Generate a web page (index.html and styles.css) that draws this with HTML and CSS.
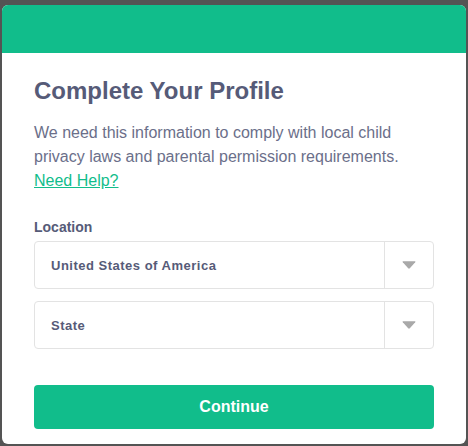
FILE: index.html
```html
<!DOCTYPE html>
<html>
<head>
<meta charset="utf-8">
<link rel="stylesheet" href="styles.css">
</head>
<body>
<div class="modal">
  <div class="modal-header"></div>
  <div class="modal-body">
    <h1 class="title">Complete Your Profile</h1>
    <p class="desc">We need this information to comply with local child privacy laws and parental permission requirements. <a href="#" class="help">Need Help?</a></p>
    <div class="field-label">Location</div>
    <div class="select">
      <span class="select-value">United States of America</span>
      <span class="select-arrow"><svg width="14" height="8" viewBox="0 0 14 8"><path d="M1.2 0.3 H12.8 Q14 0.3 13.2 1.3 L7.8 7.3 Q7 8 6.2 7.3 L0.8 1.3 Q0 0.3 1.2 0.3 Z" fill="#a9a9a9"/></svg></span>
    </div>
    <div class="select">
      <span class="select-value">State</span>
      <span class="select-arrow"><svg width="14" height="8" viewBox="0 0 14 8"><path d="M1.2 0.3 H12.8 Q14 0.3 13.2 1.3 L7.8 7.3 Q7 8 6.2 7.3 L0.8 1.3 Q0 0.3 1.2 0.3 Z" fill="#a9a9a9"/></svg></span>
    </div>
    <button class="continue">Continue</button>
  </div>
</div>
</body>
</html>
```
FILE: styles.css
```css
html, body {
  margin: 0;
  padding: 0;
  background: #545454;
  font-family: "Liberation Sans", Arial, sans-serif;
}
body {
  padding: 5px 0 0 2px;
}
.modal {
  width: 464px;
  background: #fff;
  border-radius: 6px;
  overflow: hidden;
}
.modal-header {
  height: 48px;
  background: #11bd8b;
}
.modal-body {
  padding: 24px 32px 15px 32px;
  display: flex;
  flex-direction: column;
}
.title {
  margin: 0 0 16px 0;
  font-size: 24px;
  line-height: 28px;
  font-weight: bold;
  color: #565b78;
}
.desc {
  margin: 0 0 24px 0;
  font-size: 16px;
  line-height: 24px;
  color: #6b6f8a;
}
.help {
  color: #11bd8b;
  text-decoration: underline;
}
.field-label {
  font-size: 14px;
  line-height: 20px;
  font-weight: bold;
  color: #565b78;
  margin-bottom: 4px;
}
.select {
  height: 48px;
  box-sizing: border-box;
  border: 1px solid #e3e3e3;
  border-radius: 4px;
  display: flex;
  align-items: stretch;
  margin-bottom: 12px;
}
.select-value {
  flex: 1;
  display: flex;
  align-items: center;
  padding-left: 16px;
  font-size: 13px;
  letter-spacing: 0.5px;
  font-weight: bold;
  color: #565b78;
}
.select-arrow {
  width: 48px;
  border-left: 1px solid #e3e3e3;
  display: flex;
  align-items: center;
  justify-content: center;
}
.continue {
  margin-top: 24px;
  height: 44px;
  border: none;
  border-radius: 4px;
  background: #11bd8b;
  color: #fff;
  font-family: "Liberation Sans", Arial, sans-serif;
  font-size: 16px;
  font-weight: bold;
}
```
